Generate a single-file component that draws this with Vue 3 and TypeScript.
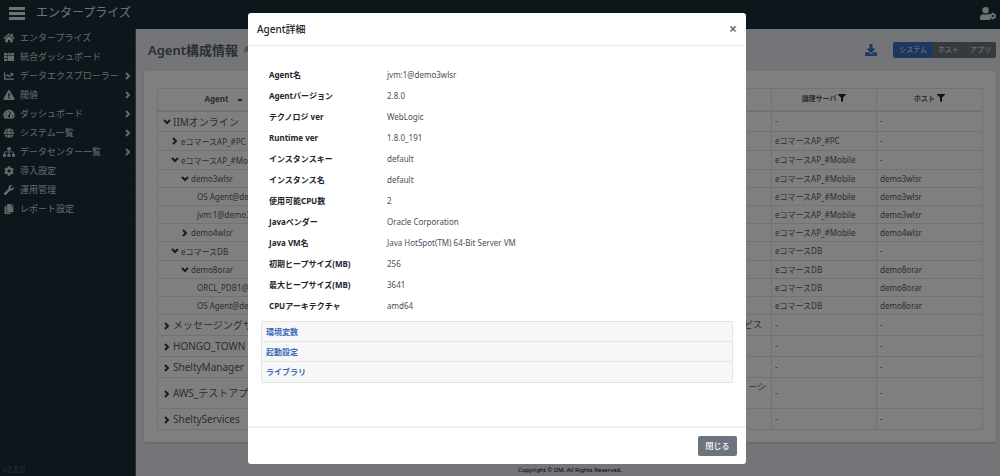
<script setup lang="ts">
import { ref } from 'vue'

interface NavItem {
  label: string
  icon: string
  box: string
  expandable?: boolean
}

interface AgentRow {
  name: string
  level: number
  state: 'open' | 'closed' | 'leaf'
  note?: string
  server: string
  host: string
  tall?: boolean
}

const icons = {
  home: 'M280.37 148.26L96 300.11V464a16 16 0 0 0 16 16l112.06-.29a16 16 0 0 0 15.92-16V368a16 16 0 0 1 16-16h64a16 16 0 0 1 16 16v95.64a16 16 0 0 0 16 16.05L464 480a16 16 0 0 0 16-16V300L295.67 148.26a12.19 12.19 0 0 0-15.3 0zM571.6 251.47L488 182.56V44.05a12 12 0 0 0-12-12h-56a12 12 0 0 0-12 12v72.61L318.47 43a48 48 0 0 0-61 0L4.34 251.47a12 12 0 0 0-1.6 16.9l25.5 31A12 12 0 0 0 45.15 301l235.22-193.74a12.19 12.19 0 0 1 15.3 0L530.9 301a12 12 0 0 0 16.9-1.6l25.5-31a12 12 0 0 0-1.7-16.93z',
  panels: 'M0 48h150v115H0zM181 48h150v115H181zM362 48h150v115H362zM0 194h150v115H0zM181 194h331v270H181zM0 340h150v124H0z',
  chart: 'M496 384H64V80c0-8.84-7.16-16-16-16H16C7.16 64 0 71.16 0 80v336c0 17.67 14.33 32 32 32h464c8.84 0 16-7.16 16-16v-32c0-8.84-7.16-16-16-16zM464 96H345.94c-21.38 0-32.09 25.85-16.97 40.97l32.4 32.4L288 242.75l-73.37-73.37c-12.5-12.5-32.76-12.5-45.25 0l-68.69 68.69c-6.25 6.25-6.25 16.38 0 22.63l22.62 22.62c6.25 6.25 16.38 6.25 22.63 0L192 237.25l73.37 73.37c12.5 12.5 32.76 12.5 45.25 0l96-96 32.4 32.4c15.12 15.12 40.97 4.41 40.97-16.97V112c.01-8.84-7.15-16-15.99-16z',
  warning: 'M569.517 440.013C587.975 472.007 564.806 512 527.94 512H48.054c-36.937 0-59.999-40.055-41.577-71.987L246.423 23.985c18.467-32.009 64.72-31.951 83.154 0l239.94 416.028zM288 354c-25.405 0-46 20.595-46 46s20.595 46 46 46 46-20.595 46-46-20.595-46-46-46zm-43.673-165.346l7.418 136c.347 6.364 5.609 11.346 11.982 11.346h48.546c6.373 0 11.635-4.982 11.982-11.346l7.418-136c.375-6.874-5.098-12.654-11.982-12.654h-63.383c-6.884 0-12.356 5.78-11.981 12.654z',
  gauge: 'M288 32C129 32 0 161 0 320c0 53 14 102 39 145 6 9 16 15 27 15h444c11 0 21-6 27-15 25-43 39-92 39-145C576 161 447 32 288 32zM288 96a32 32 0 1 1 0 64 32 32 0 0 1 0-64zM96 384a32 32 0 1 1 0-64 32 32 0 0 1 0 64zM144 240a32 32 0 1 1 0-64 32 32 0 0 1 0 64zM340 416H236c-24-50 4-94 45-96l70-150c12-22 50-8 42 18l-64 150c23 22 25 50 11 78zM480 384a32 32 0 1 1 0-64 32 32 0 0 1 0 64z',
  globe: 'M177 0h142c-25-8-45-8-71-8s-46 0-71 8zM336 160C321 70 287 8 248 8s-73 62-88 152zM152 256c0 22 1 44 3 64h186c4-42 4-86 0-128H155c-2 20-3 42-3 64zM477 160C448 90 389 36 316 16c25 35 42 87 51 144zM180 16C107 36 48 90 19 160h110c9-57 26-109 51-144zM487 192H373c4 42 4 86 0 128h114c12-42 12-86 0-128zM120 256c0-22 1-43 3-64H9c-12 42-12 86 0 128h114c-2-21-3-42-3-64zM160 352c15 90 49 152 88 152s73-62 88-152zM316 496c73-20 132-74 161-144H367c-9 57-26 109-51 144zM19 352c29 70 88 124 161 144-25-35-42-87-51-144z',
  sitemap: 'M128 352H32c-18 0-32 14-32 32v96c0 18 14 32 32 32h96c18 0 32-14 32-32v-96c0-18-14-32-32-32zM104 272h192v48h48v-48h192v48h48v-58c0-21-17-38-38-38H344v-64h40c18 0 32-14 32-32V32c0-18-14-32-32-32H256c-18 0-32 14-32 32v96c0 18 14 32 32 32h40v64H94c-21 0-38 17-38 38v58h48zM368 352h-96c-18 0-32 14-32 32v96c0 18 14 32 32 32h96c18 0 32-14 32-32v-96c0-18-14-32-32-32zM608 352h-96c-18 0-32 14-32 32v96c0 18 14 32 32 32h96c18 0 32-14 32-32v-96c0-18-14-32-32-32z',
  cog: 'M487.4 315.7l-42.6-24.6c4.3-23.2 4.3-47 0-70.2l42.6-24.6c4.9-2.8 7.1-8.6 5.5-14-11.1-35.6-30-67.8-54.7-94.6-3.8-4.1-10-5.1-14.8-2.3L380.8 110c-17.9-15.4-38.5-27.3-60.8-35.1V25.8c0-5.6-3.9-10.5-9.4-11.7-36.7-8.2-74.3-7.8-109.2 0-5.5 1.2-9.4 6.1-9.4 11.7V75c-22.2 7.9-42.8 19.8-60.8 35.1L88.7 85.5c-4.9-2.8-11-1.9-14.8 2.3-24.7 26.7-43.6 58.9-54.7 94.6-1.7 5.4.6 11.2 5.5 14L67.3 221c-4.3 23.2-4.3 47 0 70.2l-42.6 24.6c-4.9 2.8-7.1 8.6-5.5 14 11.1 35.6 30 67.8 54.7 94.6 3.8 4.1 10 5.1 14.8 2.3l42.6-24.6c17.9 15.4 38.5 27.3 60.8 35.1v49.2c0 5.6 3.9 10.5 9.4 11.7 36.7 8.2 74.3 7.8 109.2 0 5.5-1.2 9.4-6.1 9.4-11.7v-49.2c22.2-7.9 42.8-19.8 60.8-35.1l42.6 24.6c4.9 2.8 11 1.9 14.8-2.3 24.7-26.7 43.6-58.9 54.7-94.6 1.5-5.5-.7-11.3-5.6-14.1zM256 336c-44.1 0-80-35.9-80-80s35.9-80 80-80 80 35.9 80 80-35.9 80-80 80z',
  wrench: 'M507.73 109.1c-2.24-9.03-13.54-12.09-20.12-5.51l-74.36 74.36-67.88-11.31-11.31-67.88 74.36-74.36c6.62-6.62 3.43-17.9-5.66-20.16-47.38-11.74-99.55.91-136.58 37.93-39.64 39.64-50.55 97.1-34.05 147.2L18.74 402.76c-24.99 24.99-24.99 65.51 0 90.5 24.99 24.99 65.51 24.99 90.5 0l213.21-213.21c50.12 16.71 107.47 5.68 147.37-34.22 37.07-37.07 49.7-89.32 37.91-136.73z',
  copy: 'M320 448v40c0 13.255-10.745 24-24 24H24c-13.255 0-24-10.745-24-24V120c0-13.255 10.745-24 24-24h72v296c0 30.879 25.121 56 56 56h168zm0-344V0H152c-13.255 0-24 10.745-24 24v368c0 13.255 10.745 24 24 24h272c13.255 0 24-10.745 24-24V128H344c-13.2 0-24-10.8-24-24zm120.971-31.029L375.029 7.029A24 24 0 0 0 358.059 0H352v96h96v-6.059a24 24 0 0 0-7.029-16.97z',
  filter: 'M487.976 0H24.028C2.71 0-8.047 25.866 7.058 40.971L192 225.941V432c0 7.831 3.821 15.17 10.237 19.662l80 55.98C298.02 518.69 320 507.493 320 487.98V225.941l184.947-184.97C520.021 25.896 509.338 0 487.976 0z',
  download: 'M216 0h80c13.3 0 24 10.7 24 24v168h87.7c17.8 0 26.7 21.5 14.1 34.1L269.7 378.3c-7.5 7.5-19.8 7.5-27.3 0L90.1 226.1c-12.6-12.6-3.7-34.1 14.1-34.1H192V24c0-13.3 10.7-24 24-24zm296 376v112c0 13.3-10.7 24-24 24H24c-13.3 0-24-10.7-24-24V376c0-13.3 10.7-24 24-24h146.7l49 49c20.1 20.1 52.5 20.1 72.6 0l49-49H488c13.3 0 24 10.7 24 24zm-124 88c0-11-9-20-20-20s-20 9-20 20 9 20 20 20 20-9 20-20zm64 0c0-11-9-20-20-20s-20 9-20 20 9 20 20 20 20-9 20-20z',
}

const nav: NavItem[] = [
  { label: 'エンタープライズ', icon: icons.home, box: '0 0 576 512' },
  { label: '統合ダッシュボード', icon: icons.panels, box: '0 0 512 512' },
  { label: 'データエクスプローラー', icon: icons.chart, box: '0 0 512 512', expandable: true },
  { label: '閾値', icon: icons.warning, box: '0 0 576 512', expandable: true },
  { label: 'ダッシュボード', icon: icons.gauge, box: '0 0 576 512', expandable: true },
  { label: 'システム一覧', icon: icons.globe, box: '0 0 496 512', expandable: true },
  { label: 'データセンター一覧', icon: icons.sitemap, box: '0 0 640 512', expandable: true },
  { label: '導入設定', icon: icons.cog, box: '0 0 512 512' },
  { label: '運用管理', icon: icons.wrench, box: '0 0 512 512' },
  { label: 'レポート設定', icon: icons.copy, box: '0 0 448 512' },
]

const rows: AgentRow[] = [
  { name: 'IIMオンライン', level: 0, state: 'open', server: '-', host: '-' },
  { name: 'eコマースAP_#PC', level: 1, state: 'closed', server: 'eコマースAP_#PC', host: '-' },
  { name: 'eコマースAP_#Mobile', level: 1, state: 'open', server: 'eコマースAP_#Mobile', host: '-' },
  { name: 'demo3wlsr', level: 2, state: 'open', server: 'eコマースAP_#Mobile', host: 'demo3wlsr' },
  { name: 'OS Agent@demo', level: 3, state: 'leaf', server: 'eコマースAP_#Mobile', host: 'demo3wlsr' },
  { name: 'jvm:1@demo3', level: 3, state: 'leaf', server: 'eコマースAP_#Mobile', host: 'demo3wlsr' },
  { name: 'demo4wlsr', level: 2, state: 'closed', server: 'eコマースAP_#Mobile', host: 'demo4wlsr' },
  { name: 'eコマースDB', level: 1, state: 'open', server: 'eコマースDB', host: '-' },
  { name: 'demo8orar', level: 2, state: 'open', server: 'eコマースDB', host: 'demo8orar' },
  { name: 'ORCL_PDB1@de', level: 3, state: 'leaf', server: 'eコマースDB', host: 'demo8orar' },
  { name: 'OS Agent@demo', level: 3, state: 'leaf', server: 'eコマースDB', host: 'demo8orar' },
  { name: 'メッセージングサ', level: 0, state: 'closed', note: 'ービス', server: '-', host: '-' },
  { name: 'HONGO_TOWN', level: 0, state: 'closed', server: '-', host: '-' },
  { name: 'SheltyManager', level: 0, state: 'closed', server: '-', host: '-' },
  { name: 'AWS_テストアプ', level: 0, state: 'closed', note: 'ーシ', server: '-', host: '-', tall: true },
  { name: 'SheltyServices', level: 0, state: 'closed', server: '-', host: '-' },
]

const details: [string, string][] = [
  ['Agent名', 'jvm:1@demo3wlsr'],
  ['Agentバージョン', '2.8.0'],
  ['テクノロジ ver', 'WebLogic'],
  ['Runtime ver', '1.8.0_191'],
  ['インスタンスキー', 'default'],
  ['インスタンス名', 'default'],
  ['使用可能CPU数', '2'],
  ['Javaベンダー', 'Oracle Corporation'],
  ['Java VM名', 'Java HotSpot(TM) 64-Bit Server VM'],
  ['初期ヒープサイズ(MB)', '256'],
  ['最大ヒープサイズ(MB)', '3641'],
  ['CPUアーキテクチャ', 'amd64'],
]

const sections = ['環境変数', '起動設定', 'ライブラリ']
const views = ['システム', 'ホスト', 'アプリ']
const activeView = ref('システム')
const dialogOpen = ref(true)
</script>

<template>
  <div class="app">
    <header class="topbar">
      <button class="icon-btn" type="button" aria-label="メニュー">
        <svg class="burger" viewBox="0 0 16 13"><path d="M0 0h16v3H0zM0 5h16v3H0zM0 10h16v3H0z" /></svg>
      </button>
      <span class="brand">エンタープライズ</span>
      <button class="icon-btn user" type="button" aria-label="ユーザー設定">
        <svg viewBox="0 0 640 512">
          <path d="M224 256a128 128 0 1 0 0-256 128 128 0 0 0 0 256zM313 288c-56 26-120 26-178 0C60 288 0 348 0 422v42c0 26 22 48 48 48h352c10 0 18-3 25-7-12-10-20-24-16-40l4-18-22-40 16-58 24-18-10-32c-30-8-70-11-108-11z" />
          <g transform="translate(368 216) scale(.56)"><path :d="icons.cog" /></g>
        </svg>
      </button>
    </header>

    <div class="columns">
      <nav class="sidebar">
        <a v-for="item in nav" :key="item.label" class="nav-item" href="#">
          <svg class="nav-icon" :viewBox="item.box"><path fill-rule="evenodd" :d="item.icon" /></svg>
          <span>{{ item.label }}</span>
          <svg v-if="item.expandable" class="chevron" viewBox="0 0 8 8"><path d="M2 1l3 3-3 3" /></svg>
        </a>
        <span class="version">v2.8.0</span>
      </nav>

      <main class="main">
        <div class="heading">
          <h1>Agent構成情報</h1>
          <span class="subtitle">Agent</span>
          <button class="icon-btn download" type="button" aria-label="ダウンロード">
            <svg viewBox="0 0 512 512"><path :d="icons.download" /></svg>
          </button>
          <div class="segments">
            <button
              v-for="view in views"
              :key="view"
              type="button"
              :class="{ active: view === activeView }"
              @click="activeView = view"
            >{{ view }}</button>
          </div>
        </div>

        <section class="card">
          <table class="agents">
            <colgroup>
              <col class="col-agent"><col class="col-note"><col class="col-server"><col class="col-host">
            </colgroup>
            <thead>
              <tr>
                <th class="agent-head">Agent <span class="caret"></span></th>
                <th></th>
                <th>論理サーバ <svg class="filter" viewBox="0 0 512 512"><path :d="icons.filter" /></svg></th>
                <th>ホスト <svg class="filter" viewBox="0 0 512 512"><path :d="icons.filter" /></svg></th>
              </tr>
            </thead>
            <tbody>
              <tr v-for="(row, i) in rows" :key="i" :class="['level-' + row.level, { tall: row.tall }]">
                <td class="name">
                  <svg v-if="row.state !== 'leaf'" class="chevron" viewBox="0 0 8 8">
                    <path :d="row.state === 'open' ? 'M1 2l3 3 3-3' : 'M2 1l3 3-3 3'" />
                  </svg>
                  <span>{{ row.name }}</span>
                </td>
                <td class="note">{{ row.note }}</td>
                <td>{{ row.server }}</td>
                <td>{{ row.host }}</td>
              </tr>
            </tbody>
          </table>
        </section>

        <footer class="copyright">Copyright © IIM. All Rights Reserved.</footer>
      </main>
    </div>

    <div v-if="dialogOpen" class="backdrop">
      <div class="dialog" role="dialog" aria-modal="true" aria-labelledby="dialog-title">
        <div class="dialog-head">
          <h2 id="dialog-title">Agent詳細</h2>
          <button class="close" type="button" aria-label="閉じる" @click="dialogOpen = false">×</button>
        </div>
        <div class="dialog-body">
          <dl class="details">
            <template v-for="[label, value] in details" :key="label">
              <dt>{{ label }}</dt>
              <dd>{{ value }}</dd>
            </template>
          </dl>
          <div class="accordion">
            <button v-for="section in sections" :key="section" type="button">{{ section }}</button>
          </div>
        </div>
        <div class="dialog-foot">
          <button class="dismiss" type="button" @click="dialogOpen = false">閉じる</button>
        </div>
      </div>
    </div>
  </div>
</template>

<style>
body {
  margin: 0;
  overflow: hidden;
}
</style>

<style scoped>
.app,
.app * {
  box-sizing: border-box;
}

.app {
  display: flex;
  flex-direction: column;
  min-height: 100vh;
  background: #e8ebf0;
  color: #555c63;
  font-family: "Noto Sans", "Noto Sans CJK JP", sans-serif;
  font-size: 8px;
  line-height: 12px;
}

button {
  font: inherit;
  cursor: pointer;
}

svg {
  display: block;
  flex: none;
  fill: currentColor;
}

.icon-btn {
  display: flex;
  padding: 0;
  border: 0;
  background: none;
  color: inherit;
}

.topbar {
  display: flex;
  align-items: center;
  height: 29px;
  padding: 0 4px 3px 9px;
  background: #182d37;
  color: #dfe3e6;
}

.burger {
  width: 16px;
  height: 13px;
}

.brand {
  margin-left: 11px;
  font-size: 12px;
  line-height: 18px;
}

.user {
  margin-left: auto;
}

.user svg {
  width: 16px;
  height: 13px;
}

.columns {
  display: flex;
  flex: 1;
}

.sidebar {
  display: flex;
  flex-direction: column;
  flex: none;
  width: 136px;
  border-right: 1px solid #53636e;
  background: #182d37;
  color: #ced3d7;
  font-size: 9px;
}

.nav-item {
  display: flex;
  align-items: center;
  height: 19px;
  padding: 0 3px;
  border-bottom: 1px solid #1c323c;
  color: inherit;
  text-decoration: none;
  white-space: nowrap;
}

.nav-icon {
  width: 12px;
  height: 10px;
  margin-right: 5px;
}

.chevron {
  width: 8px;
  height: 8px;
  fill: none;
  stroke: currentColor;
  stroke-width: 2;
}

.nav-item .chevron {
  margin-left: auto;
}

.version {
  margin-top: auto;
  padding: 0 3px;
  color: #4b5a63;
  font-size: 8px;
}

.main {
  display: flex;
  flex-direction: column;
  flex: 1;
  min-width: 0;
  padding: 12px 4px 0 8px;
}

.heading {
  display: flex;
  align-items: center;
  height: 18px;
  padding-left: 4px;
  margin-bottom: 12px;
}

h1 {
  margin: 0;
  font-size: 13px;
  font-weight: 600;
  line-height: 18px;
}

.subtitle {
  margin-left: 6px;
}

.download {
  margin-left: auto;
  color: #3a6fc4;
}

.download svg {
  width: 12px;
  height: 12px;
}

.segments {
  display: flex;
  margin-left: 16px;
  overflow: hidden;
  border-radius: 2px;
}

.segments button {
  height: 16px;
  padding: 0 5px 0 6px;
  border: 0;
  background: #6c757d;
  color: #f2f4f5;
  font-size: 7px;
}

.segments .active {
  background: #3a6ec2;
}

.card {
  padding: 17px 13px 12px;
  border-radius: 3px;
  background: #fff;
  box-shadow: 0 1px 2px rgba(40, 50, 70, 0.2);
}

.agents {
  width: 100%;
  border-collapse: collapse;
  table-layout: fixed;
}

.col-agent {
  width: 16%;
}

.col-server {
  width: 105px;
}

.col-host {
  width: 106px;
}

.agents th,
.agents td {
  overflow: hidden;
  padding: 0 3px;
  border: 1px solid #e1e5ea;
  text-align: left;
  white-space: nowrap;
}

.agents th {
  height: 22px;
  border-bottom-width: 2px;
  font-size: 7px;
  text-align: center;
}

.agents .agent-head {
  font-size: 8px;
}

.caret {
  display: inline-block;
  margin-left: 6px;
  border: 3px solid transparent;
  border-top-color: currentColor;
  border-bottom: 0;
}

.filter {
  display: inline-block;
  width: 8px;
  height: 8px;
  color: #212529;
  vertical-align: -1px;
}

.agents tbody tr {
  height: 18px;
}

.agents .level-0 {
  height: 21px;
}

.agents .level-1 {
  height: 19px;
}

.agents .tall {
  height: 31px;
}

.name .chevron {
  display: inline-block;
  margin-right: 2px;
  color: #343a40;
  vertical-align: middle;
}

.name span {
  vertical-align: middle;
}

.level-0 .name {
  padding-left: 5px;
  font-size: 10px;
}

.level-1 .name {
  padding-left: 13px;
}

.level-2 .name {
  padding-left: 23px;
}

.level-3 .name {
  padding-left: 39px;
}

.agents .note {
  padding-right: 9px;
  font-size: 9px;
  text-align: right;
}

.agents .tall .note {
  padding-right: 5px;
  padding-top: 3px;
  vertical-align: top;
}

.copyright {
  margin-top: auto;
  color: #000;
  font-size: 6px;
  text-align: center;
}

.backdrop {
  position: fixed;
  inset: 0;
  display: flex;
  align-items: flex-start;
  justify-content: center;
  padding: 13px 6px 12px 0;
  background: rgba(0, 0, 0, 0.5);
}

.dialog {
  width: 100%;
  max-width: 498px;
  border-radius: 3px;
  background: #fff;
  color: #212529;
}

.dialog-head {
  display: flex;
  align-items: center;
  justify-content: space-between;
  height: 33px;
  padding: 0 9px;
  border-bottom: 1px solid #e9ecef;
}

h2 {
  margin: 0;
  font-size: 10px;
  font-weight: 500;
  line-height: 16px;
}

.close {
  padding: 0;
  border: 0;
  background: none;
  color: #6c757d;
  font-size: 14px;
  font-weight: 700;
  line-height: 16px;
}

.dialog-body {
  padding: 18px 13px 43px;
}

.details {
  display: grid;
  grid-template-columns: 118px 1fr;
  grid-auto-rows: 21px;
  align-items: center;
  margin: 0 0 5px;
  padding-left: 8px;
}

dt {
  font-weight: 700;
}

dd {
  margin: 0;
  color: #495057;
}

.accordion {
  display: flex;
  flex-direction: column;
  border: 1px solid #e3e4e6;
  border-radius: 2px;
}

.accordion button {
  height: 20px;
  padding: 0 4px;
  border: 0;
  border-bottom: 1px solid #e3e4e6;
  background: #f7f7f7;
  color: #3a6ab5;
  font-weight: 700;
  text-align: left;
}

.accordion button:last-child {
  border-bottom: 0;
}

.dialog-foot {
  display: flex;
  justify-content: flex-end;
  padding: 8px 9px;
  border-top: 2px solid #f1f2f4;
}

.dismiss {
  width: 39px;
  height: 20px;
  padding: 0;
  border: 0;
  border-radius: 2px;
  background: #6c757d;
  color: #fff;
  font-weight: 500;
}
</style>
